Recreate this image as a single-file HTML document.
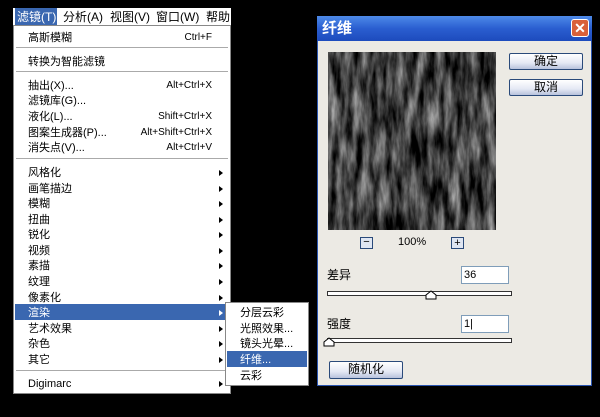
<!DOCTYPE html>
<html><head><meta charset="utf-8"><style>
*{margin:0;padding:0;box-sizing:border-box}
body{width:600px;height:417px;background:#000;position:relative;overflow:hidden;font-family:"Liberation Sans","Noto Sans CJK SC",sans-serif;font-size:11px;color:#000}
.a{position:absolute}
.mb{left:13px;top:8px;width:218px;height:18px;background:#fff;}
.mb span{position:absolute;top:1px;font-size:12px;line-height:16px}
.menu{left:13px;top:25px;width:218px;height:369px;background:#fff;border:1px solid #888}
.it{position:absolute;left:14px;font-size:11px;line-height:14px;white-space:nowrap}
.sc{position:absolute;right:18px;font-size:10px;line-height:14px}
.ar{position:absolute;left:205px;width:0;height:0;border-top:3px solid transparent;border-bottom:3px solid transparent;border-left:4px solid #000}
.sep{position:absolute;left:2px;right:2px;height:2px;border-top:1px solid #aaa;border-bottom:1px solid #fff}
.btn{position:absolute;border:1px solid #2a4a7a;border-radius:2px;background:linear-gradient(#fff,#e4e8f4 60%,#b8c2dc);text-align:center;font-size:12px;line-height:15px}
.inp{position:absolute;background:#fff;border:1px solid #7f9db9;font-size:11px;line-height:16px;padding-left:2px}
.tr{position:absolute;height:5px;border:1px solid #333;background:#fff}
</style></head><body>
<div class="a mb">
<div class="a" style="left:2px;top:0;width:42px;height:18px;background:#3a67b0"></div>
<span style="left:4px;color:#fff">滤镜(T)</span>
<span style="left:50px">分析(A)</span>
<span style="left:97px">视图(V)</span>
<span style="left:143px">窗口(W)</span>
<span style="left:193px">帮助(</span>
</div>
<div class="a menu">
<div class="it" style="top:5px">高斯模糊</div><div class="sc" style="top:5px">Ctrl+F</div>
<div class="sep" style="top:21px"></div>
<div class="it" style="top:29px">转换为智能滤镜</div>
<div class="sep" style="top:45px"></div>
<div class="it" style="top:53px">抽出(X)...</div><div class="sc" style="top:53px">Alt+Ctrl+X</div>
<div class="it" style="top:68px">滤镜库(G)...</div>
<div class="it" style="top:84px">液化(L)...</div><div class="sc" style="top:84px">Shift+Ctrl+X</div>
<div class="it" style="top:100px">图案生成器(P)...</div><div class="sc" style="top:100px">Alt+Shift+Ctrl+X</div>
<div class="it" style="top:115px">消失点(V)...</div><div class="sc" style="top:115px">Alt+Ctrl+V</div>
<div class="sep" style="top:132px"></div>
<div class="it" style="top:140px">风格化</div><div class="ar" style="top:144px"></div>
<div class="it" style="top:156px">画笔描边</div><div class="ar" style="top:160px"></div>
<div class="it" style="top:171px">模糊</div><div class="ar" style="top:175px"></div>
<div class="it" style="top:187px">扭曲</div><div class="ar" style="top:191px"></div>
<div class="it" style="top:202px">锐化</div><div class="ar" style="top:206px"></div>
<div class="it" style="top:218px">视频</div><div class="ar" style="top:222px"></div>
<div class="it" style="top:233px">素描</div><div class="ar" style="top:237px"></div>
<div class="it" style="top:249px">纹理</div><div class="ar" style="top:253px"></div>
<div class="it" style="top:265px">像素化</div><div class="ar" style="top:269px"></div>
<div class="a" style="left:1px;top:278px;width:214px;height:16px;background:#3a67b0"></div>
<div class="it" style="top:280px;color:#fff">渲染</div><div class="ar" style="top:284px;border-left-color:#fff"></div>
<div class="it" style="top:296px">艺术效果</div><div class="ar" style="top:300px"></div>
<div class="it" style="top:311px">杂色</div><div class="ar" style="top:315px"></div>
<div class="it" style="top:327px">其它</div><div class="ar" style="top:331px"></div>
<div class="sep" style="top:344px"></div>
<div class="it" style="top:351px">Digimarc</div><div class="ar" style="top:355px"></div>
</div>
<div class="a" style="left:225px;top:302px;width:84px;height:84px;background:#fff;border:1px solid #888">
<div class="it" style="left:14px;top:3px">分层云彩</div>
<div class="it" style="left:14px;top:19px">光照效果...</div>
<div class="it" style="left:14px;top:34px">镜头光晕...</div>
<div class="a" style="left:1px;top:48px;width:80px;height:16px;background:#3a67b0"></div>
<div class="it" style="left:14px;top:50px;color:#fff">纤维...</div>
<div class="it" style="left:14px;top:66px">云彩</div>
</div>
<div class="a" style="left:317px;top:16px;width:275px;height:370px;background:#eceae4;border:1px solid #2a55b0"></div>
<div class="a" style="left:317px;top:16px;width:275px;height:25px;background:linear-gradient(#4d8ae8,#2a5ed0 50%,#1d4bbd)"></div>
<div class="a" style="left:322px;top:20px;color:#fff;font-size:15px;font-weight:bold;line-height:18px">纤维</div>
<div class="a" style="left:571px;top:19px;width:18px;height:18px;border:1px solid #fff;border-radius:3px;background:#d9603a;color:#fff;font-size:14px;font-weight:bold;text-align:center;line-height:16px">✕</div>
<svg class="a" style="left:328px;top:52px" width="168" height="178">
<filter id="f" x="0" y="0" width="100%" height="100%" color-interpolation-filters="sRGB"><feTurbulence type="fractalNoise" baseFrequency="0.12 0.025" numOctaves="4" seed="3"/><feColorMatrix type="matrix" values="1.1 0 0 0 -0.3  1.1 0 0 0 -0.3  1.1 0 0 0 -0.3  0 0 0 0 1"/></filter>
<rect width="168" height="178" fill="#222"/><rect width="168" height="178" filter="url(#f)"/>
</svg>
<div class="btn" style="left:509px;top:53px;width:74px;height:17px">确定</div>
<div class="btn" style="left:509px;top:79px;width:74px;height:17px">取消</div>
<div class="a" style="left:360px;top:237px;width:13px;height:12px;border:1px solid #2a4a7a;background:#dfe6f2;font-size:11px;line-height:9px;text-align:center">−</div>
<div class="a" style="left:398px;top:236px;font-size:11px">100%</div>
<div class="a" style="left:451px;top:237px;width:13px;height:12px;border:1px solid #2a4a7a;background:#dfe6f2;font-size:11px;line-height:10px;text-align:center">+</div>
<div class="a" style="left:327px;top:266px;font-size:12px">差异</div>
<div class="inp" style="left:461px;top:266px;width:48px;height:18px">36</div>
<div class="tr" style="left:327px;top:291px;width:185px"></div>
<svg class="a" style="left:425px;top:290px" width="12" height="10"><path d="M1 9V5L6 1L11 5V9Z" fill="#fff" stroke="#000"/></svg>
<div class="a" style="left:327px;top:315px;font-size:12px">强度</div>
<div class="inp" style="left:461px;top:315px;width:48px;height:18px">1|</div>
<div class="tr" style="left:327px;top:338px;width:185px"></div>
<svg class="a" style="left:323px;top:337px" width="12" height="10"><path d="M1 9V5L6 1L11 5V9Z" fill="#fff" stroke="#000"/></svg>
<div class="btn" style="left:329px;top:361px;width:74px;height:18px">随机化</div>
</body></html>
